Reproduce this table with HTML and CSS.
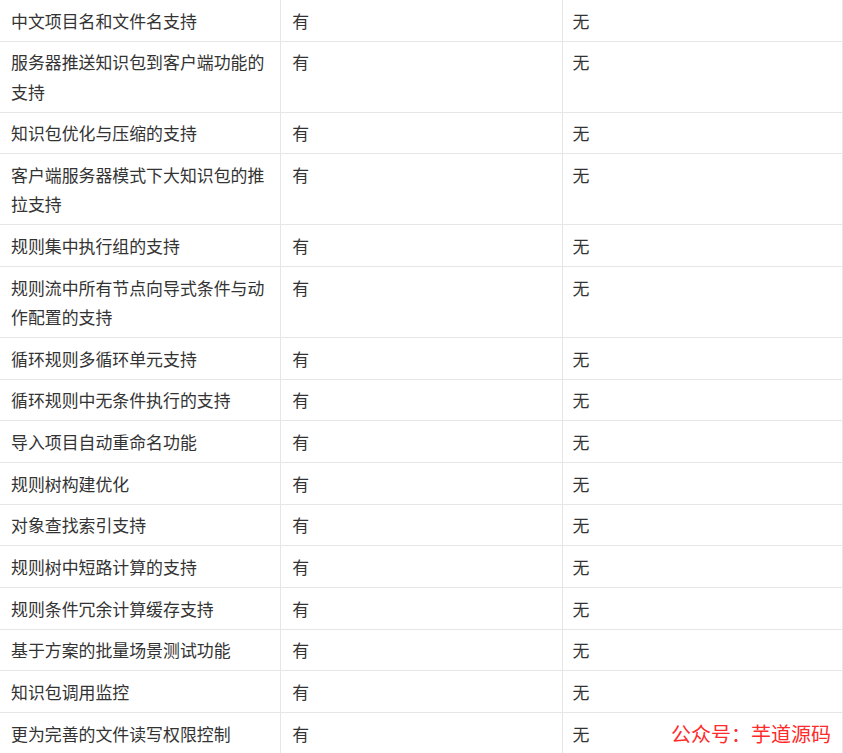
FILE: index.html
```html
<!DOCTYPE html>
<html lang="zh">
<head>
<meta charset="utf-8">
<link rel="stylesheet" href="styles.css">
</head>
<body>
<div class="page">
  <table class="cmp">
    <tbody>
      <tr><td>中文项目名和文件名支持</td><td>有</td><td>无</td></tr>
      <tr><td>服务器推送知识包到客户端功能的支持</td><td>有</td><td>无</td></tr>
      <tr><td>知识包优化与压缩的支持</td><td>有</td><td>无</td></tr>
      <tr><td>客户端服务器模式下大知识包的推拉支持</td><td>有</td><td>无</td></tr>
      <tr><td>规则集中执行组的支持</td><td>有</td><td>无</td></tr>
      <tr><td>规则流中所有节点向导式条件与动作配置的支持</td><td>有</td><td>无</td></tr>
      <tr><td>循环规则多循环单元支持</td><td>有</td><td>无</td></tr>
      <tr><td>循环规则中无条件执行的支持</td><td>有</td><td>无</td></tr>
      <tr><td>导入项目自动重命名功能</td><td>有</td><td>无</td></tr>
      <tr><td>规则树构建优化</td><td>有</td><td>无</td></tr>
      <tr><td>对象查找索引支持</td><td>有</td><td>无</td></tr>
      <tr><td>规则树中短路计算的支持</td><td>有</td><td>无</td></tr>
      <tr><td>规则条件冗余计算缓存支持</td><td>有</td><td>无</td></tr>
      <tr><td>基于方案的批量场景测试功能</td><td>有</td><td>无</td></tr>
      <tr><td>知识包调用监控</td><td>有</td><td>无</td></tr>
      <tr><td>更为完善的文件读写权限控制</td><td>有</td><td>无</td></tr>
    </tbody>
  </table>
  <div class="watermark">公众号：芋道源码</div>
</div>
</body>
</html>
```
FILE: styles.css
```css
html, body {
  margin: 0;
  padding: 0;
  background: #ffffff;
  overflow: hidden;
}
.page {
  position: relative;
  width: 843px;
  height: 753px;
  overflow: hidden;
}
.cmp {
  border-collapse: collapse;
  table-layout: fixed;
  width: 844px;
  margin-left: -1px;
  margin-top: -1.1px;
  font-family: "Noto Sans CJK SC", "Noto Sans", sans-serif;
  font-size: 16.9px;
  line-height: 29.4px;
  color: #333333;
}
.cmp td {
  border: 1px solid #e6e6e6;
  padding: 5.633px 11px 5.633px 11px;
  vertical-align: top;
  width: 33.33%;
}
.cmp td:nth-child(3) {
  padding-left: 10px;
}
.watermark {
  position: absolute;
  right: 12px;
  bottom: 7px;
  font-family: "Noto Sans CJK SC", sans-serif;
  font-size: 20px;
  line-height: 24px;
  color: #ff2a2a;
}
```
